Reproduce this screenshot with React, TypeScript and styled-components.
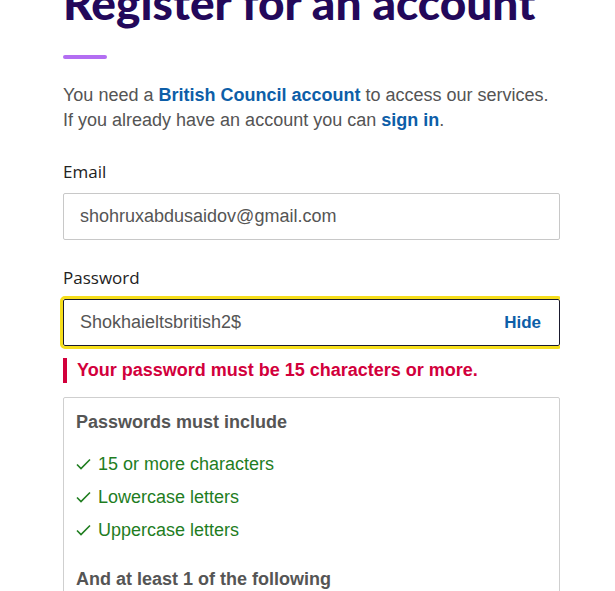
import styled, { createGlobalStyle } from 'styled-components';

const GlobalStyle = createGlobalStyle`
  body {
    margin: 0;
    background: #fff;
    font-family: 'Liberation Sans', Arial, sans-serif;
  }
`;

const rules = ['15 or more characters', 'Lowercase letters', 'Uppercase letters'];

function Check() {
  return (
    <svg width="15" height="12" viewBox="0 0 15 12" fill="none">
      <path d="M1 6.5L5 10.5L14 1.5" stroke="#1f7d1f" strokeWidth="1.6" />
    </svg>
  );
}

export default function App() {
  return (
    <>
      <GlobalStyle />
      <Page>
        <Title>Register for an account</Title>
        <Accent />
        <Intro>
          You need a <Link href="#">British Council account</Link> to access our services.
          <br />
          If you already have an account you can <Link href="#">sign in</Link>.
        </Intro>

        <Field>
          <Label>Email</Label>
          <Input>shohruxabdusaidov@gmail.com</Input>
        </Field>

        <Field $gap={14}>
          <Label>Password</Label>
          <Input focused>
            Shokhaieltsbritish2$
            <Toggle>Hide</Toggle>
          </Input>
          <Error>Your password must be 15 characters or more.</Error>
        </Field>

        <RulesBox>
          <RulesTitle>Passwords must include</RulesTitle>
          <RuleList>
            {rules.map((r) => (
              <Rule key={r}>
                <Check />
                {r}
              </Rule>
            ))}
          </RuleList>
          <RulesTitle>And at least 1 of the following</RulesTitle>
        </RulesBox>
      </Page>
    </>
  );
}

// Styles
const Page = styled.div`
  width: 497px;
  padding-left: 63px;
  overflow: hidden;
`;

const Title = styled.h1`
  margin: -23px 0 0;
  font-family: Lato, 'Noto Sans', sans-serif;
  font-weight: 900;
  font-size: 46px;
  line-height: 52px;
  color: #23085a;
  white-space: nowrap;
`;

const Accent = styled.div`
  width: 44px;
  height: 4px;
  border-radius: 2px;
  background: #b36ef2;
  margin-top: 26px;
`;

const Intro = styled.p`
  margin: 24px 0 27px;
  font-size: 18px;
  line-height: 25px;
  color: #545454;
`;

const Link = styled.a`
  color: #0d5ea8;
  font-weight: 700;
  text-decoration: none;
`;

const Field = styled.div<{ $gap?: number }>`
  margin-bottom: ${(p) => p.$gap ?? 26}px;
`;

const Label = styled.div`
  font-family: 'Open Sans', 'Noto Sans', sans-serif;
  font-size: 17px;
  line-height: 24px;
  color: #222;
  margin-bottom: 9px;
`;

const Input = styled.div<{ focused?: boolean }>`
  display: flex;
  align-items: center;
  justify-content: space-between;
  box-sizing: border-box;
  height: 47px;
  padding: 0 18px 0 16px;
  border: 1px solid ${(p) => (p.focused ? '#1a1a2e' : '#c8c8c8')};
  border-radius: 2px;
  font-size: 18px;
  color: #555;
  outline: ${(p) => (p.focused ? '3px solid #f6de1c' : 'none')};
  margin: ${(p) => (p.focused ? '3px 0 0' : '0')};
`;

const Toggle = styled.span`
  font-size: 17px;
  font-weight: 700;
  color: #0d5ea8;
`;

const Error = styled.div`
  margin-top: 12px;
  padding-left: 10px;
  border-left: 4px solid #d2003c;
  font-size: 18px;
  line-height: 25px;
  font-weight: 700;
  color: #d2003c;
`;

const RulesBox = styled.div`
  border: 1px solid #cfcfcf;
  border-radius: 2px;
  padding: 12px 12px 20px;
`;

const RulesTitle = styled.div`
  font-size: 18px;
  line-height: 24px;
  font-weight: 700;
  color: #555;
`;

const RuleList = styled.ul`
  list-style: none;
  margin: 18px 0 25px;
  padding: 0;
  display: flex;
  flex-direction: column;
  gap: 9px;
`;

const Rule = styled.li`
  display: flex;
  align-items: center;
  gap: 7px;
  font-size: 18px;
  line-height: 24px;
  color: #1f7d1f;
`;
